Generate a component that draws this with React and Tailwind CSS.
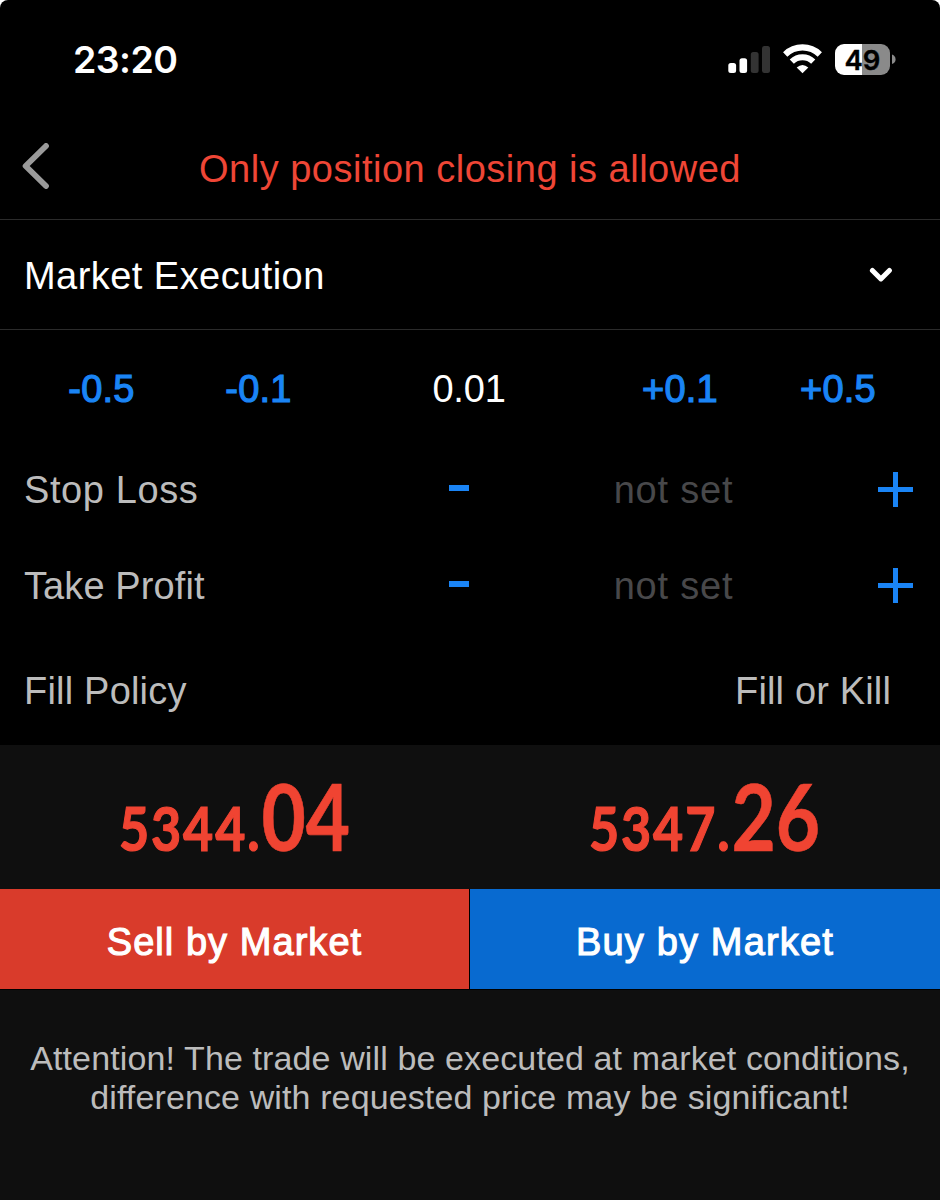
const SANS = "font-['Liberation_Sans',Arial,sans-serif]";

function StatusBar() {
  return (
    <div className="flex h-[118px] items-start justify-between pl-[73px] pr-[44px]">
      <span className="mt-[36px] font-['Inter',sans-serif] text-[37.5px] font-semibold leading-[48px] tracking-[-0.6px] text-white">23:20</span>
      <div className="mt-[44px] flex items-start">
        <svg className="h-[31px] w-[42px]" viewBox="0 0 42 31">
          <rect x="0.3" y="19" width="7.8" height="10" rx="2.5" fill="#fff" />
          <rect x="11.5" y="14.3" width="7.6" height="14.7" rx="2.5" fill="#fff" />
          <rect x="22.8" y="8" width="7.8" height="21" rx="2.5" fill="#333" />
          <rect x="34" y="2" width="8" height="27" rx="2.5" fill="#333" />
        </svg>
        <svg className="ml-[13px] h-[31px] w-[39px]" viewBox="0 0 39 31" fill="none" stroke="#fff">
          <path d="M2.2 10.4 A25 25 0 0 1 36.8 10.4" strokeWidth="6.2" />
          <path d="M8.8 17.6 A15.5 15.5 0 0 1 30.2 17.6" strokeWidth="6" />
          <path d="M19.5 29.3 L13.7 23.6 Q19.5 18.4 25.3 23.6 Z" fill="#fff" stroke="none" />
        </svg>
        <div className="ml-[13px] flex h-[31px] w-[55px] items-center justify-center rounded-[9px] bg-[linear-gradient(90deg,#fff_0,#fff_27px,#8a8a8a_27px)]">
          <span className="pt-px font-['Inter',sans-serif] text-[27.5px] font-semibold leading-[31px] text-black [-webkit-text-stroke:0.4px_#000]">49</span>
        </div>
        <svg className="ml-[2px] mt-[10px] h-[11px] w-[4px]" viewBox="0 0 4 11">
          <path d="M0 0.6 Q3.6 2 3.6 5.4 Q3.6 8.6 0 10 Z" fill="#8a8a8a" />
        </svg>
      </div>
    </div>
  );
}

function Header() {
  return (
    <div className="flex h-[102px] items-center border-b border-[#2b2b2b] px-[22px]">
      <svg className="-mt-[6px] h-[46px] w-[28px] shrink-0" viewBox="0 0 28 46" fill="none" stroke="#9a9a9a" strokeWidth="5.8" strokeLinecap="round" strokeLinejoin="round">
        <path d="M24 3 L3.6 23 L24 43" />
      </svg>
      <h1 className="mr-[28px] flex-1 whitespace-nowrap text-center text-[38px] leading-[44px] tracking-[0.5px] text-[#ef4636]">Only position closing is allowed</h1>
    </div>
  );
}

function Step({ children, className }) {
  return (
    <span className={"text-center text-[38px] leading-[44px] tracking-[0.2px] text-[#1a84f5] [-webkit-text-stroke:1.2px_#1a84f5] " + className}>{children}</span>
  );
}

function LevelRow({ label, className }) {
  return (
    <div className="flex h-24 items-center pl-6 pr-[27px] pt-px">
      <span className={"w-[425px] pt-px text-[#bcbcbc] " + className}>{label}</span>
      <span className="-mt-[3px] h-[6px] w-[20px] bg-[#1a84f5]" />
      <span className="flex-1 pt-px text-center tracking-[0.8px] text-[#48484a]">not set</span>
      <svg className="h-[35px] w-[35px]" viewBox="0 0 35 35" stroke="#1a84f5" strokeWidth="5">
        <path d="M0 17.5 H35 M17.5 0 V35" />
      </svg>
    </div>
  );
}

function Price({ whole, cents }) {
  return (
    <div className="flex h-[144px] w-1/2 items-baseline justify-center font-['Lato',sans-serif] font-bold text-[#f04432]">
      <div className="flex origin-center scale-x-[.84] items-baseline">
        <span className="text-[62px] leading-[142px] tracking-[2.2px] [-webkit-text-stroke:1.2px_#f04432]">{whole}.</span>
        <span className="text-[91px] leading-[142px] [-webkit-text-stroke:0.6px_#f04432]">{cents}</span>
      </div>
    </div>
  );
}

export default function App() {
  return (
    <div className="bg-white">
      <main className={"flex h-[1200px] w-[940px] flex-col overflow-hidden rounded-t-[8px] bg-black text-[38px] leading-[44px] " + SANS}>
        <StatusBar />
        <Header />
        <div className="flex h-[110px] items-center justify-between border-b border-[#2b2b2b] pl-6 pr-[48px] pt-[3px] text-white">
          <span className="tracking-[0.45px]">Market Execution</span>
          <svg className="-mt-[3px] h-[16px] w-[23px]" viewBox="0 0 23 16" fill="none" stroke="#fff" strokeWidth="5" strokeLinecap="round" strokeLinejoin="round">
            <path d="M3.4 3.4 L11.9 11.9 L20.4 3.4" />
          </svg>
        </div>
        <div className="flex h-[111px] items-center px-[23px] pt-[7px]">
          <Step className="w-[157px]">-0.5</Step>
          <Step className="w-[157px]">-0.1</Step>
          <span className="flex-1 text-center tracking-[-0.2px] text-white">0.01</span>
          <Step className="w-[158px]">+0.1</Step>
          <Step className="w-[158px]">+0.5</Step>
        </div>
        <LevelRow label="Stop Loss" className="tracking-[0.6px]" />
        <LevelRow label="Take Profit" className="tracking-[0.1px]" />
        <div className="flex h-[112px] items-center justify-between pl-6 pr-[49px] pt-1 text-[#bcbcbc]">
          <span className="tracking-[0.2px]">Fill Policy</span>
          <span className="tracking-[0.15px]">Fill or Kill</span>
        </div>
        <section className="flex-1 bg-[#0f0f0f]">
          <div className="flex">
            <Price whole="5344" cents="04" />
            <Price whole="5347" cents="26" />
          </div>
          <div className="flex h-[101px] gap-px border-b border-black bg-black text-white [-webkit-text-stroke:1.1px_#fff]">
            <button className="w-[469px] bg-[#d93b2b] pt-[5px] tracking-[1.05px]">Sell by Market</button>
            <button className="w-[470px] bg-[#086ad0] pt-[5px] tracking-[1.15px]">Buy by Market</button>
          </div>
          <p className="whitespace-nowrap pt-[49px] text-center text-[34px] leading-[39px] tracking-[0.12px] text-[#bcbcbc]">
            Attention! The trade will be executed at market conditions,
            <br />
            difference with requested price may be significant!
          </p>
        </section>
      </main>
    </div>
  );
}
